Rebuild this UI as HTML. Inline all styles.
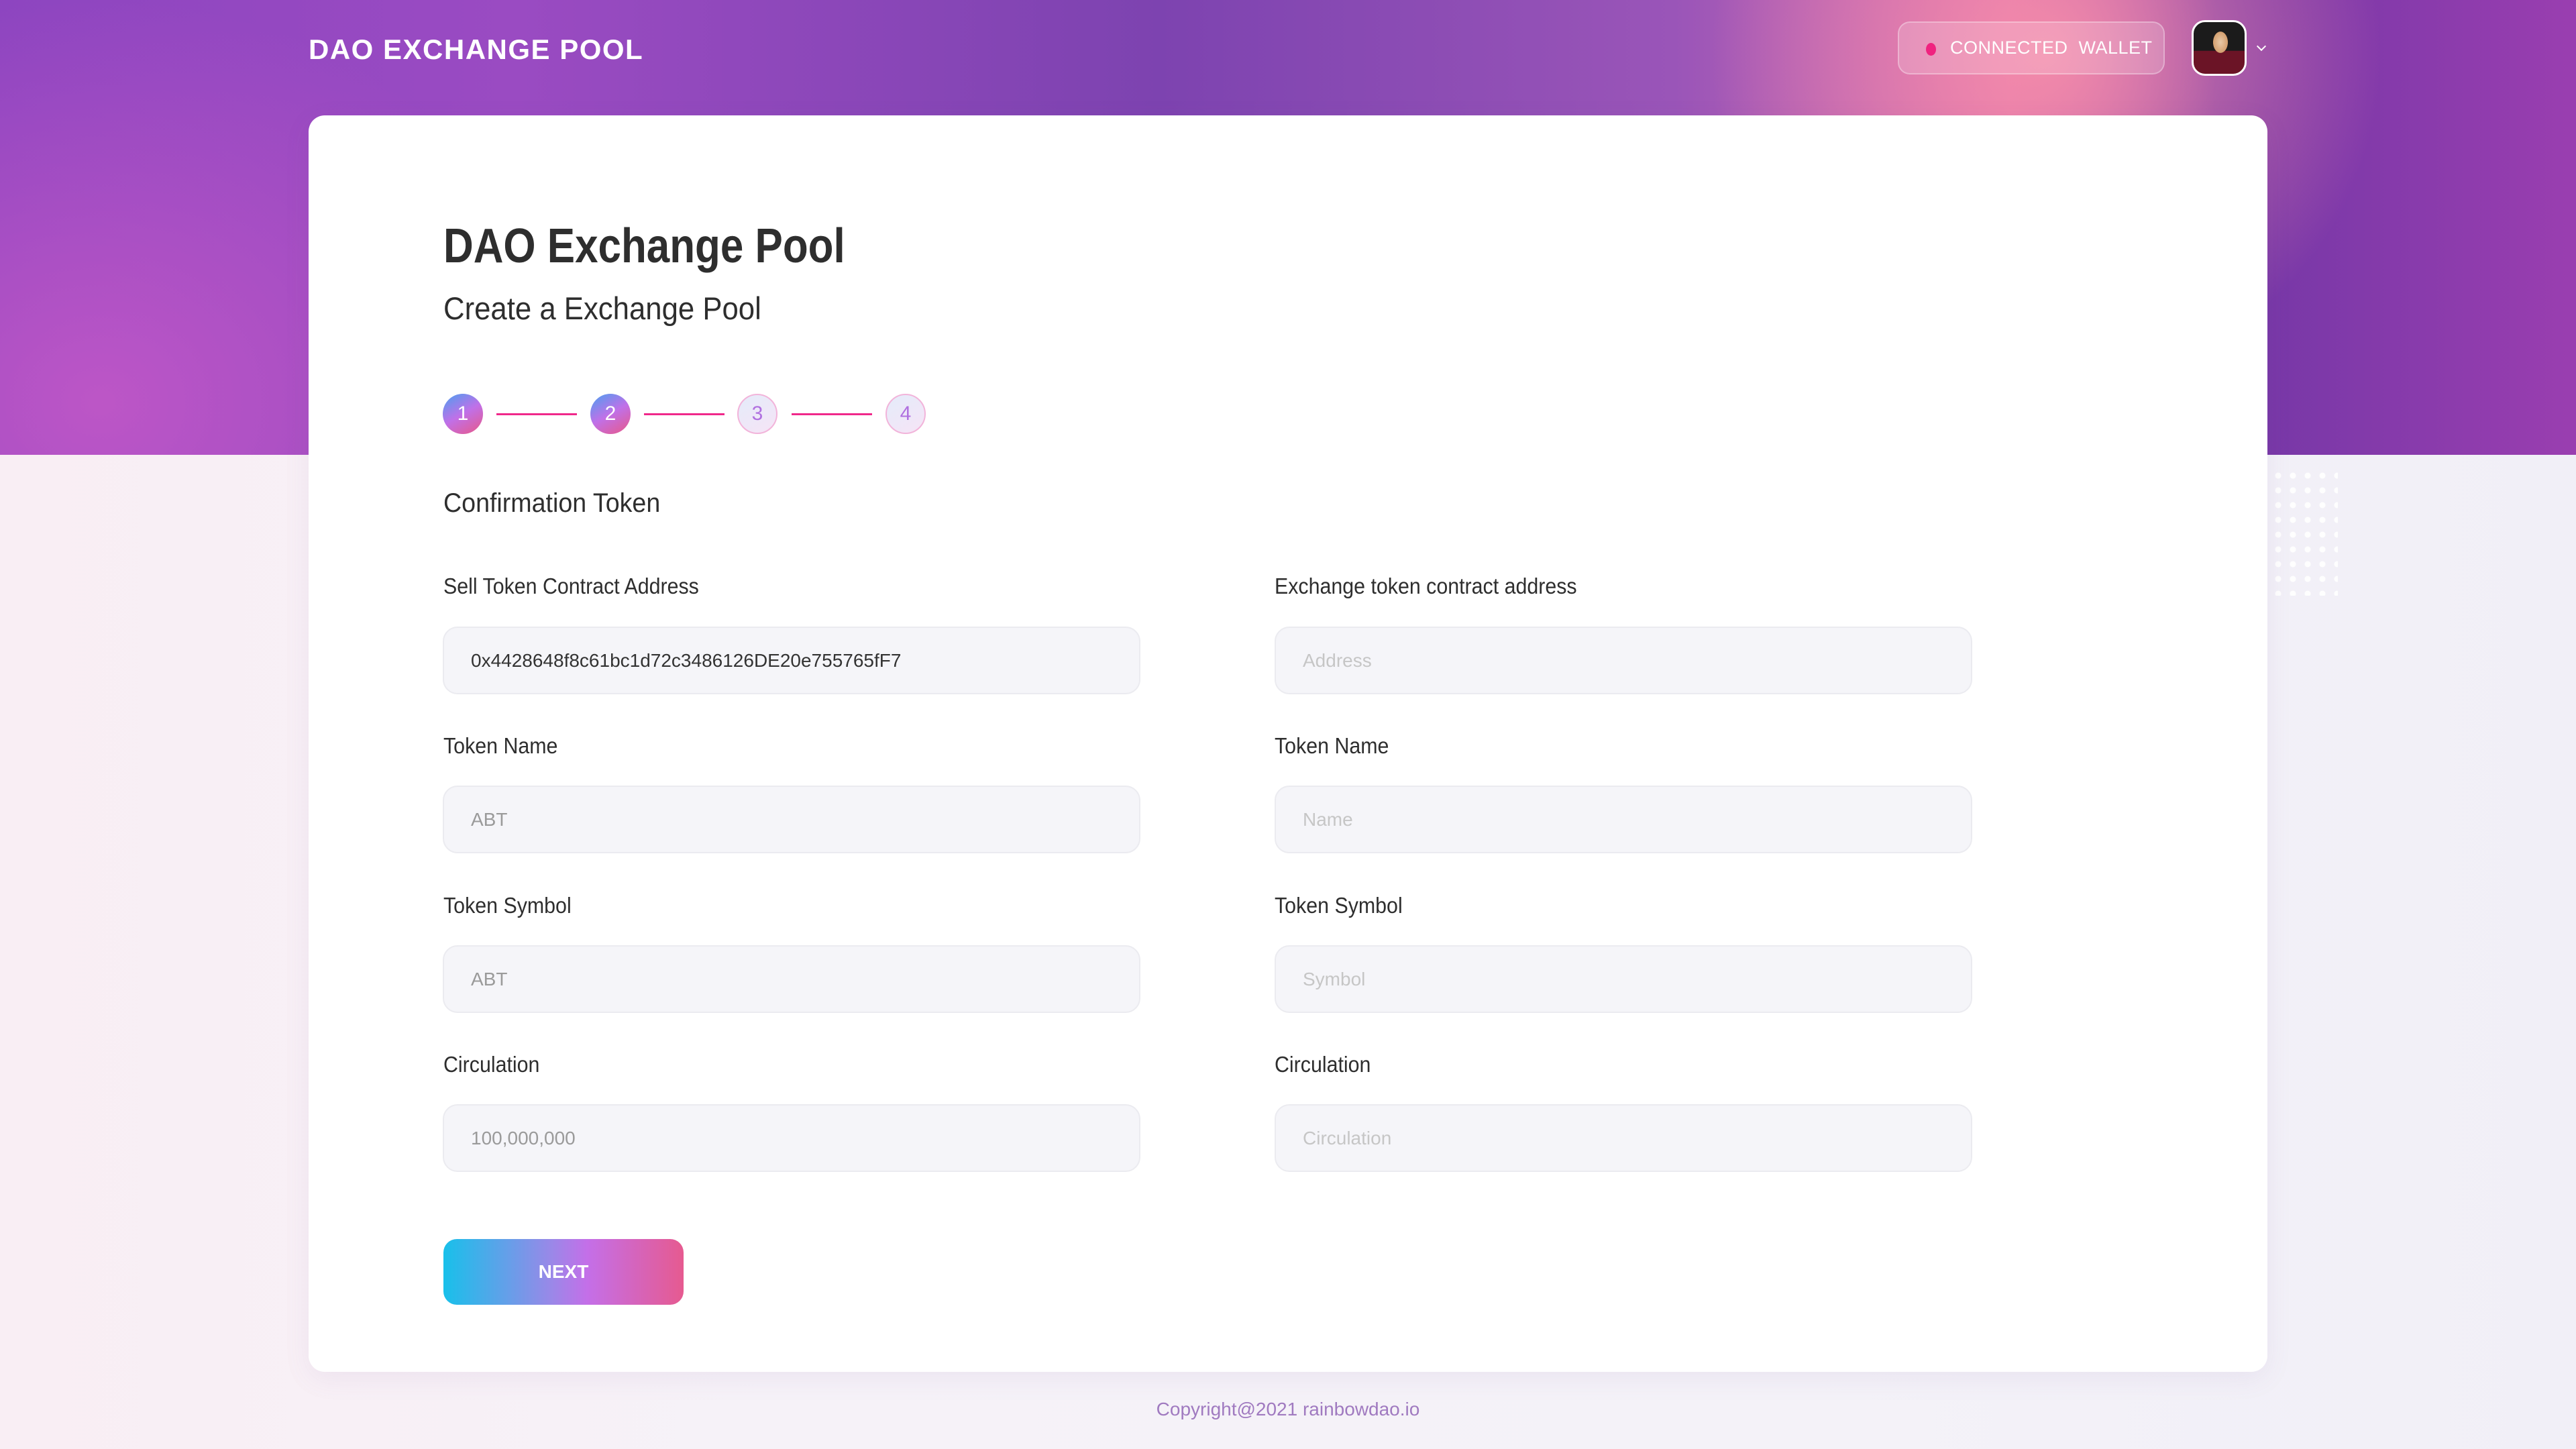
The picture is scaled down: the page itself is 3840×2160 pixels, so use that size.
<!DOCTYPE html>
<html><head><meta charset="utf-8"><style>
*{margin:0;padding:0;box-sizing:border-box}
body{width:3840px;height:2160px;overflow:hidden;font-family:"Liberation Sans",sans-serif;background:linear-gradient(90deg,#f9eef4 0%,#f6f2f8 30%,#f4f2f8 70%,#f1eff7 100%);position:relative}
.banner{position:absolute;left:0;top:0;width:3840px;height:678px;background:
radial-gradient(ellipse 500px 500px at 3050px 80px,rgba(245,140,170,.95),rgba(245,140,170,0) 100%),
radial-gradient(ellipse 700px 600px at 150px 600px,rgba(200,90,200,.8),rgba(200,90,200,0) 100%),
linear-gradient(90deg,#8d45c0 0%,#9a4bc2 20%,#7d43b0 45%,#9a55b8 65%,#d86fae 78%,#7237a6 86%,#9a3eb0 100%)}
.logo{position:absolute;left:460px;top:50px;color:#fff;font-weight:bold;font-size:42px;letter-spacing:1.5px}
.wallet{position:absolute;left:2829px;top:32px;width:398px;height:79px;border-radius:18px;background:rgba(255,255,255,.18);border:2px solid rgba(255,255,255,.3);color:#fff;font-size:27px;display:flex;align-items:center;padding-left:76px;letter-spacing:.5px}
.wallet:before{content:"";position:absolute;left:40px;top:30px;width:15px;height:19px;border-radius:50%;background:#f0227f}
.av{position:absolute;left:3267px;top:30px;width:82px;height:83px;border-radius:20px;border:3px solid #fff;background:radial-gradient(ellipse 18px 26px at 40px 30px,#e8c9a8,#d4a070 60%,transparent 62%),linear-gradient(#1b1b1b 55%,#6b1426 56%);}
.chev{position:absolute;left:3366px;top:64px;width:10px;height:10px;border-right:2px solid #fff;border-bottom:2px solid #fff;transform:rotate(45deg)}
.card{position:absolute;left:460px;top:172px;width:2920px;height:1873px;background:#fff;border-radius:24px;box-shadow:0 10px 40px rgba(120,80,150,.08)}
.h1{position:absolute;left:661px;top:326px;font-size:72px;font-weight:bold;color:#2e2e2e;transform:scaleX(.86);transform-origin:left}
.h2{position:absolute;left:661px;top:432px;font-size:47px;color:#2e2e2e;transform:scaleX(.93);transform-origin:left}
.step{position:absolute;top:587px;width:60px;height:60px;border-radius:50%;color:#fff;font-size:30px;display:flex;align-items:center;justify-content:center}
.on{background:linear-gradient(150deg,#4aa0f0,#c070e8 50%,#e85888)}
.off{background:linear-gradient(150deg,#e4ecfa,#f6e4f6);border:2px solid #f2b4da;color:#b070e0}
.ln{position:absolute;top:616px;width:120px;height:3px;background:#f0288a}
.h3{position:absolute;left:661px;top:728px;font-size:40px;color:#2e2e2e;transform:scaleX(.94);transform-origin:left}
.lb{position:absolute;font-size:33px;color:#2e2e2e;transform:scaleX(.92);transform-origin:left}
.in{position:absolute;width:1040px;height:101px;border-radius:22px;background:#f5f5f9;border:2px solid #ebebf0;font-size:28px;color:#9a9a9a;padding-left:40px;display:flex;align-items:center}
.in.v1{color:#333}
.in.ph{color:#c6c6c6}
.next{position:absolute;left:661px;top:1847px;width:358px;height:98px;border-radius:20px;background:linear-gradient(90deg,#18c0ea,#9a88e8 45%,#c46fe8 60%,#e65a90);color:#fff;font-size:28px;font-weight:bold;display:flex;align-items:center;justify-content:center}
.copy{position:absolute;left:0;width:3840px;top:2085px;text-align:center;font-size:28px;color:#a07ac0}
.dots{position:absolute;left:3385px;top:698px;width:100px;height:190px;background-image:radial-gradient(circle,rgba(255,255,255,.9) 4px,transparent 5px);background-size:22px 22px}
</style></head><body>
<div class="banner"></div>
<div class="dots"></div>
<div class="logo">DAO EXCHANGE POOL</div>
<div class="wallet">CONNECTED&nbsp; WALLET</div>
<div class="av"></div>
<div class="chev"></div>
<div class="card"></div>
<div class="h1">DAO Exchange Pool</div>
<div class="h2">Create a Exchange Pool</div>
<div class="step on" style="left:660px">1</div>
<div class="ln" style="left:740px"></div>
<div class="step on" style="left:880px">2</div>
<div class="ln" style="left:960px"></div>
<div class="step off" style="left:1099px">3</div>
<div class="ln" style="left:1180px"></div>
<div class="step off" style="left:1320px">4</div>
<div class="h3">Confirmation Token</div>

<div class="lb" style="left:661px;top:855px">Sell Token Contract Address</div>
<div class="lb" style="left:1900px;top:855px">Exchange token contract address</div>
<div class="in v1" style="left:660px;top:934px">0x4428648f8c61bc1d72c3486126DE20e755765fF7</div>
<div class="in ph" style="left:1900px;top:934px">Address</div>

<div class="lb" style="left:661px;top:1093px">Token Name</div>
<div class="lb" style="left:1900px;top:1093px">Token Name</div>
<div class="in" style="left:660px;top:1171px">ABT</div>
<div class="in ph" style="left:1900px;top:1171px">Name</div>

<div class="lb" style="left:661px;top:1331px">Token Symbol</div>
<div class="lb" style="left:1900px;top:1331px">Token Symbol</div>
<div class="in" style="left:660px;top:1409px">ABT</div>
<div class="in ph" style="left:1900px;top:1409px">Symbol</div>

<div class="lb" style="left:661px;top:1568px">Circulation</div>
<div class="lb" style="left:1900px;top:1568px">Circulation</div>
<div class="in" style="left:660px;top:1646px">100,000,000</div>
<div class="in ph" style="left:1900px;top:1646px">Circulation</div>

<div class="next">NEXT</div>
<div class="copy">Copyright@2021 rainbowdao.io</div>
</body></html>
